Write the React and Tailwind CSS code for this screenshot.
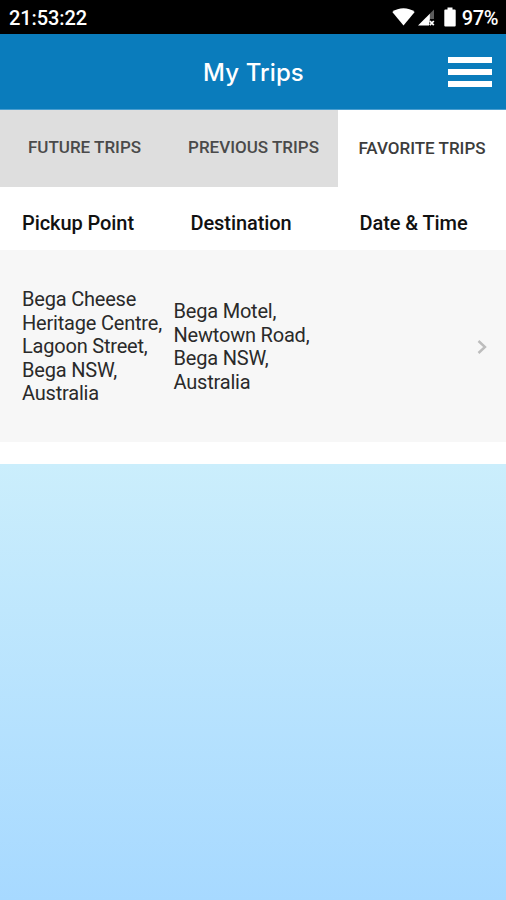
const headings = ['Pickup Point', 'Destination', 'Date & Time'];

function StatusBar() {
  return (
    <div className="flex h-[34px] items-center justify-between bg-black pl-[9px] pr-2 text-[20px] font-medium leading-none text-white">
      <span className="pt-[2px] tracking-[-0.1px]">21:53:22</span>
      <div className="flex items-center">
        <svg className="mr-px" width="23" height="18" viewBox="0 0 23 18" fill="white" aria-hidden="true">
          <path d="M0.3 4C6.5-1 16.5-1 22.7 4L11.5 17.6Z" />
        </svg>
        <svg className="ml-[2px]" width="17" height="18" viewBox="0 0 17 18" aria-hidden="true">
          <path d="M16 1.5V11H11V6.5Z" fill="#5c5c5c" />
          <path d="M11.8 5.7V12L11 17.5H0Z" fill="white" />
          <path d="M11.8 13l4 4.2M15.8 13l-4 4.2" stroke="white" strokeWidth="1.8" />
        </svg>
        <svg className="ml-[9px]" width="12" height="20" viewBox="0 0 12 20" fill="white" aria-hidden="true">
          <path d="M3.5 0.5h5V2.5H10.7a1 1 0 0 1 1 1V18.4a1 1 0 0 1-1 1H1.3a1 1 0 0 1-1-1V3.5a1 1 0 0 1 1-1H3.5Z" />
        </svg>
        <span className="ml-[6px] pt-[2px] text-[20px] tracking-[-0.4px]">97%</span>
      </div>
    </div>
  );
}

function Header() {
  return (
    <header className="grid h-[76px] grid-cols-[1fr_auto_1fr] items-center border-b border-[#4a9ed0] bg-[#0a7cbc] pr-[14px]">
      <span />
      <h1 className="pl-[15px] pt-[3px] font-['Inter',sans-serif] text-[24px] font-medium leading-none tracking-[0.1px] text-white">My Trips</h1>
      <button aria-label="Menu" className="flex w-[44px] flex-col gap-[6px] justify-self-end">
        <span className="h-[6px] bg-white" />
        <span className="h-[6px] bg-white" />
        <span className="h-[6px] bg-white" />
      </button>
    </header>
  );
}

function Tabs() {
  return (
    <nav className="flex h-[77px] text-[17px] font-medium leading-none text-[#4a4a4a]">
      <button className="w-[169px] bg-[#dedede] pb-[2px]">FUTURE TRIPS</button>
      <button className="w-[169px] bg-[#dedede] pb-[2px]">PREVIOUS TRIPS</button>
      <button className="w-[168px] bg-white text-[#3c3c3c]">FAVORITE TRIPS</button>
    </nav>
  );
}

export default function App() {
  return (
    <div className="flex h-[900px] w-[506px] flex-col overflow-hidden bg-white font-['Roboto',sans-serif]">
      <StatusBar />
      <Header />
      <Tabs />
      <div className="grid h-[63px] grid-cols-[168.5px_169px_1fr] items-center pl-[22px] pt-[8px] text-[20px] font-medium leading-none tracking-[-0.08px] text-[#111]">
        {headings.map((heading) => <span key={heading}>{heading}</span>)}
      </div>
      <div className="flex h-[192px] items-center bg-[#f7f7f7] pl-[22px] pr-[19px] pt-[2px] text-[20px] leading-[23.5px] tracking-[-0.2px] text-[#2a2a2a]">
        <p className="w-[151.5px] whitespace-nowrap">Bega Cheese<br />Heritage Centre,<br />Lagoon Street,<br />Bega NSW,<br />Australia</p>
        <p>Bega Motel,<br />Newtown Road,<br />Bega NSW,<br />Australia</p>
        <svg className="ml-auto" width="10" height="14" viewBox="0 0 10 14" fill="none" stroke="#bdbdbd" strokeWidth="2.4" aria-hidden="true">
          <path d="M1.5 1L8 7L1.5 13" />
        </svg>
      </div>
      <div className="h-[22px]" />
      <main className="flex-1 bg-linear-to-b from-[#cbeefc] to-[#a7d9ff]" />
    </div>
  );
}
